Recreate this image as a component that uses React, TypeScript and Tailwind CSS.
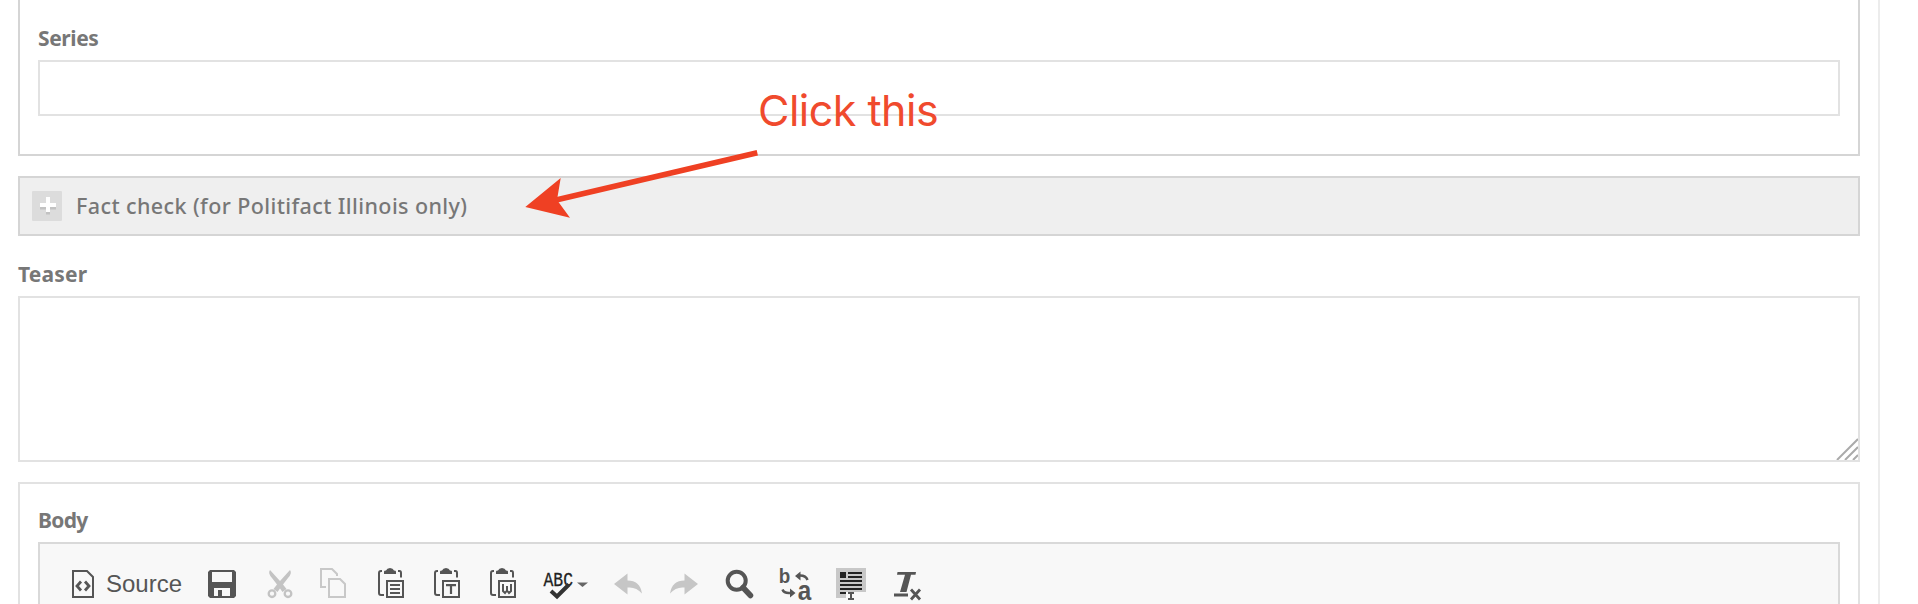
import type { ReactNode } from "react";

function Icon({ children, w = 32, color = "text-[#555]" }: { children: ReactNode; w?: number; color?: string }) {
  return (
    <svg width={w} height={34} viewBox={`0 0 ${w} 34`} fill="none" className={`shrink-0 overflow-visible ${color}`}>
      {children}
    </svg>
  );
}

function Clipboard({ children }: { children: ReactNode }) {
  return (
    <Icon>
      <path d="M6 3H5Q3 3 3 5V25Q3 27 5 27H8M22 3H23.500Q25 3 25 5V9.500" stroke="currentColor" strokeWidth="2" />
      <path d="M8 6V3.500Q8 2.500 10 2.500Q11 0 14 0Q17 0 18 2.500Q20 2.500 20 3.500V6Z" fill="currentColor" />
      <rect x="11" y="13" width="16" height="16" stroke="currentColor" strokeWidth="2" />
      {children}
    </Icon>
  );
}

function Label({ children, spacing = "tracking-[-0.4px]" }: { children: ReactNode; spacing?: string }) {
  return (
    <label className={`block h-[30px] font-['Noto_Sans','Open_Sans',sans-serif] text-[21px] leading-[30px] font-bold text-[#777] ${spacing}`}>
      {children}
    </label>
  );
}

function Toolbar() {
  return (
    <div className="flex h-[80px] items-start gap-6 border-2 border-[#d9d9d9] bg-[#f8f8f8] pt-6 pl-[30px]">
      <div className="flex w-[114px] shrink-0">
        <Icon w={36}>
          <path d="M3 3H17L23 9V29H3Z" stroke="currentColor" strokeWidth="2" />
          <path d="M11 13.500L7 18L11 22.500M15 13.500L19 18L15 22.500" stroke="currentColor" strokeWidth="2.800" />
        </Icon>
        <span className="font-['Liberation_Sans',sans-serif] text-[24px] leading-[32px] text-[#555]">Source</span>
      </div>
      <Icon>
        <path fillRule="evenodd" d="M2 2H26L28 4V28L26 30H2L0 28V4ZM4 4V14H24V4ZM6 20V28H22V20ZM10 22H14V28H10Z" fill="currentColor" />
      </Icon>
      <Icon color="text-[#c3c3c3]">
        <path d="M6 2Q3.500 5 8 10L13 16.500L9.500 21L13.500 24L16 20.500L18.500 24L22.500 21L19 16.500L24 10Q28.500 5 26 2L16 13Z" fill="currentColor" />
        <circle cx="8" cy="25.700" r="3.300" stroke="currentColor" strokeWidth="2.300" />
        <circle cx="24" cy="25.700" r="3.300" stroke="currentColor" strokeWidth="2.300" />
      </Icon>
      <Icon color="text-[#c8c8c8]">
        <path d="M6 19H1V1H12L17 6V8" stroke="currentColor" strokeWidth="2" />
        <path d="M9 11H20L25 16V29H9Z" stroke="currentColor" strokeWidth="2" />
      </Icon>
      <Clipboard>
        <path d="M14 17H24M14 21H24M14 25H24" stroke="currentColor" strokeWidth="2" />
      </Clipboard>
      <Clipboard>
        <path d="M14 17.200H24M19 17V26" stroke="currentColor" strokeWidth="2.200" />
      </Clipboard>
      <Clipboard>
        <path d="M15 16V23L17 25L19 22.500L21 25L23 23V16M19 18V23" stroke="currentColor" strokeWidth="2" />
      </Clipboard>
      <Icon w={44}>
        <text x="-0.500" y="17.800" textLength="29.500" lengthAdjust="spacingAndGlyphs" fill="#222" stroke="#222" strokeWidth="0.300" className="font-['Liberation_Mono',monospace] text-[21px]">ABC</text>
        <path d="M7 23L13 28.500L25 16.500" stroke="#333" strokeWidth="4" />
        <path d="M33 14.500H44L38.500 19Z" fill="#666" />
      </Icon>
      <Icon color="text-[#c6c6c6]">
        <path d="M2 16L15.500 5.500V12.500Q28 12.500 30 25.500Q24 18.500 15.500 19.500V26.500Z" fill="currentColor" />
      </Icon>
      <Icon color="text-[#c6c6c6]">
        <path d="M30 16L16.500 5.500V12.500Q4 12.500 2 25.500Q8 18.500 16.500 19.500V26.500Z" fill="currentColor" />
      </Icon>
      <Icon>
        <circle cx="12.700" cy="12.700" r="9" stroke="currentColor" strokeWidth="4" />
        <path d="M19 19.500L26.500 27.500" stroke="currentColor" strokeWidth="5.500" strokeLinecap="round" />
      </Icon>
      <Icon>
        <text x="-1.200" y="15.200" textLength="11.500" lengthAdjust="spacingAndGlyphs" fill="currentColor" className="font-['Liberation_Sans',sans-serif] text-[21px] font-bold">b</text>
        <text x="17.800" y="31.700" textLength="13.500" lengthAdjust="spacingAndGlyphs" fill="currentColor" className="font-['Liberation_Sans',sans-serif] text-[28px] font-bold">a</text>
        <path d="M15 8L20.500 3.500V12.500ZM15.500 25L10 20.500V29.500Z" fill="currentColor" />
        <path d="M20 7.500Q26 7.500 27.500 12M2.500 21.500Q4 25.500 10 25" stroke="currentColor" strokeWidth="2.500" />
      </Icon>
      <Icon>
        <path d="M0 0H30V24H10V30H0Z" fill="#c8c8c8" />
        <path d="M4 4H10V10H4ZM12 4H26V6H12ZM12 8H26V10H12ZM4 12H26V14H4ZM4 16H26V18H4ZM4 20H26V22H4ZM4 24H10V26H4Z" fill="#222" />
        <path d="M12 25H18M12 31H18M15 25V31" stroke="#555" strokeWidth="2" />
      </Icon>
      <Icon>
        <path d="M5.500 4H24L23.500 6.800H19L14.500 24H8L13 6.800H5Z" fill="currentColor" />
        <path d="M2 27H16M19 21.500L28 31.500M28 21.500L19 31.500" stroke="currentColor" strokeWidth="2.800" />
      </Icon>
    </div>
  );
}

export default function App() {
  return (
    <main className="relative h-[604px] w-[1918px] overflow-hidden bg-white">
      <div className="h-full w-[1880px] border-r-2 border-[#ececec] pl-[18px]">
        <div className="w-[1842px]">
          <section className="h-[156px] border-2 border-t-0 border-[#d5d5d5] px-[18px] pt-[23px]">
            <Label>Series</Label>
            <div className="mt-[7px] h-[56px] border-2 border-[#e2e2e2]" />
          </section>

          <section className="mt-5 flex h-[60px] items-center border-2 border-[#d5d5d5] bg-[#efefef] pl-3">
            <svg width="30" height="30" viewBox="0 0 30 30" fill="none" className="shrink-0">
              <rect width="30" height="30" rx="1" fill="#dcdcdc" />
              <path d="M8 16.500H24M16 9V23.500" stroke="#c2c2c2" strokeWidth="4" />
              <path d="M8 14H24M16 6V21" stroke="#fff" strokeWidth="4" />
            </svg>
            <span className="ml-[14px] font-['Noto_Sans','Open_Sans',sans-serif] text-[21.500px] leading-[30px] font-medium tracking-[0.4px] whitespace-nowrap text-[#777]">
              Fact check (for Politifact Illinois only)
            </span>
          </section>

          <section className="pt-[23px]">
            <Label spacing="tracking-[0.2px]">Teaser</Label>
            <div className="mt-[7px] flex h-[166px] items-end justify-end border-2 border-[#e2e2e2]">
              <svg width="22" height="22" viewBox="0 0 22 22" fill="none">
                <path d="M1 22L22 1M9 22L22 9M17 22L22 17" stroke="#aaa" strokeWidth="2" />
              </svg>
            </div>
          </section>

          <section className="mt-5 h-[140px] border-2 border-[#e2e2e2] px-[18px] pt-[21px]">
            <Label spacing="tracking-[-0.7px]">Body</Label>
            <div className="mt-[7px]">
              <Toolbar />
            </div>
          </section>
        </div>
      </div>

      <svg width="260" height="90" viewBox="520 140 260 90" className="absolute top-[140px] left-[520px]">
        <path d="M757.300 152.700L556 200" stroke="#ef4023" strokeWidth="5.500" />
        <path d="M525.300 207L560.700 178L557 200L570 217.700Z" fill="#ef4023" />
      </svg>
      <p className="absolute top-[83px] left-[758px] font-['Inter',sans-serif] text-[43px] leading-[54px] tracking-[-0.5px] whitespace-nowrap text-[#f04a2d]">
        Click this
      </p>
    </main>
  );
}
